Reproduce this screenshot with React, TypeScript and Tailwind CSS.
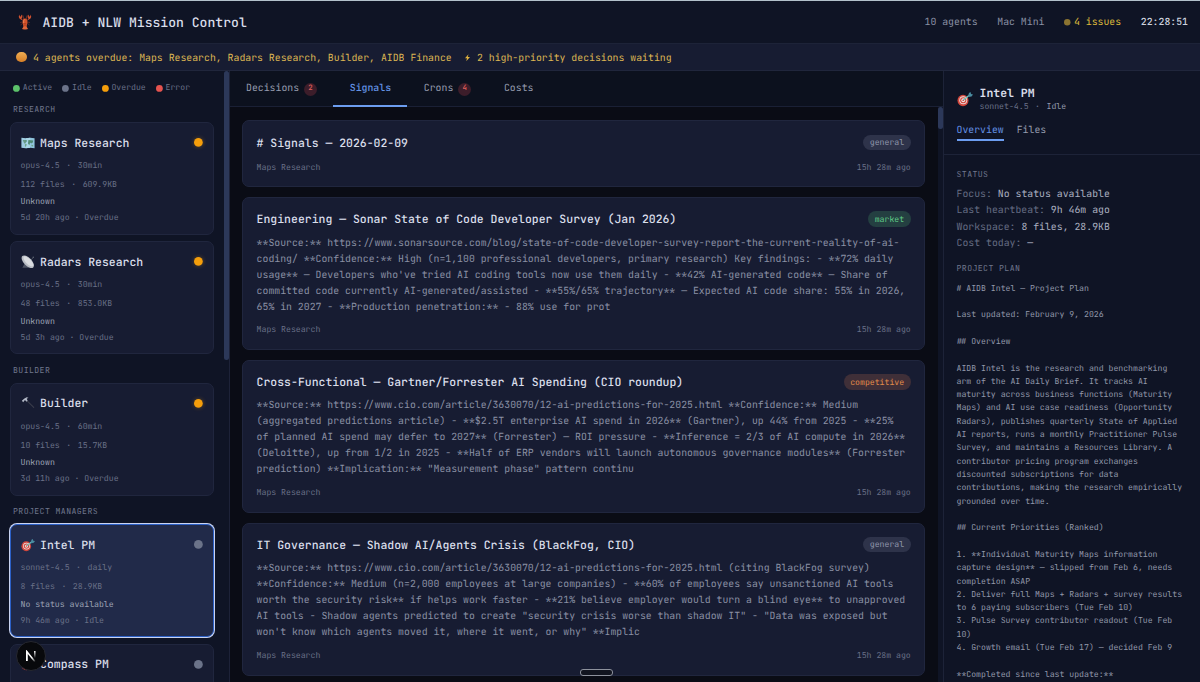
import type { ReactNode } from 'react';

type IconProps = { className?: string };

function Lobster({ className }: IconProps) {
  return (
    <svg viewBox="0 0 32 32" className={className} fill="none">
      <path d="M10 12C4 10 2 6 5 1c0 3 1 4 3 4 0-2 1-3 2-4 1 4 1 6-1 8l4 5M22 12c6-2 8-6 5-11 0 3-1 4-3 4 0-2-1-3-2-4-1 4-1 6 1 8l-4 5" fill="#cf5230" />
      <path d="M14 12 12 3M18 12l2-9" stroke="#a8401f" strokeWidth="1.2" />
      <path d="M11 16 6 17M11 19l-4 3M21 16l5 1M21 19l4 3" stroke="#7a3022" strokeWidth="1.3" />
      <path d="M16 9c4 0 5 4 5 8l-2 9h-6l-2-9c0-4 1-8 5-8Z" fill="#d5532b" />
      <path d="M13.5 19h5M13.5 22h5" stroke="#9a3519" strokeWidth="1" />
      <path d="m13 25-3 5 4 1h4l4-1-3-5Z" fill="#e0673a" />
      <path d="M15 11c-2 2-2 4-1.500 7" stroke="#f39a66" strokeWidth="1.500" />
    </svg>
  );
}

function WorldMap({ className }: IconProps) {
  return (
    <svg viewBox="0 0 32 32" className={className}>
      <path d="m1 4 10 1 10-1 10 1v23l-10-1-10 1-10-1Z" fill="#8fc4dc" />
      <path d="m11 5 10-1v23l-10 1Z" fill="#a9d6e6" />
      <path d="M4 9h7l3 2-3 4-2 3-3-4Z" fill="#4f8a72" />
      <path d="m9 18 4 1-2 6-2-2Z" fill="#5c9a78" />
      <path d="m17 9 11 1-1 5-4 2-2-2-2 6-3-4Z" fill="#4f8a72" />
      <path d="m24 20 4 1-1 3-3-1Z" fill="#6aa37c" />
      <path d="M1 4l10 1v23L1 27Z" fill="#ffffff" opacity=".15" />
    </svg>
  );
}

function Dish({ className }: IconProps) {
  return (
    <svg viewBox="0 0 32 32" className={className}>
      <path d="m9 18-6 11h16l-6-10Z" fill="#4c5263" />
      <path d="M18 16 29 5" stroke="#646b78" strokeWidth="1.500" />
      <ellipse cx="15.500" cy="15.500" rx="18" ry="9" transform="rotate(46 15.500 15.500)" fill="#b9bdc4" />
      <ellipse cx="17" cy="14.500" rx="15" ry="6" transform="rotate(46 17 14.500)" fill="#d9dbdf" />
      <circle cx="28" cy="5" r="1.800" fill="#59606e" />
    </svg>
  );
}

function Hammer({ className }: IconProps) {
  return (
    <svg viewBox="0 0 32 32" className={className} fill="none">
      <path d="m14 11 15 15" stroke="#3a3d4b" strokeWidth="2.400" strokeLinecap="round" />
      <path d="M2 11 7 6l6-3 4 1-4 2 2 4-2 3-4-4-4 5Z" fill="#b4bac8" />
    </svg>
  );
}

function Dart({ className }: IconProps) {
  return (
    <svg viewBox="0 0 32 32" className={className} fill="none">
      <ellipse cx="12" cy="19" rx="11" ry="11.500" fill="#d2473d" />
      <circle cx="12.500" cy="18.500" r="7.800" fill="#eee3e3" />
      <circle cx="12.500" cy="18.500" r="6.200" fill="#d2473d" />
      <circle cx="12.500" cy="18.500" r="3.800" fill="#efe5e5" />
      <circle cx="12.500" cy="18.500" r="1.700" fill="#c94138" />
      <path d="m13 18 11-9" stroke="#6cc4bd" strokeWidth="2.800" />
      <path d="m22 10 2-6 3-2 1 4 4 1-3 4-6 1Z" fill="#4a8ca0" />
    </svg>
  );
}

function Bolt({ className }: IconProps) {
  return (
    <svg viewBox="0 0 10 14" className={className}>
      <path d="M7 0 0 8h4L2.500 14 10 5.500H5.500Z" fill="#e0b23e" />
    </svg>
  );
}

function Dot({ className }: IconProps) {
  return (
    <svg viewBox="0 0 10 10" className={'overflow-visible ' + className}>
      <circle cx="5" cy="5" r="5" fill="currentColor" />
    </svg>
  );
}

type Agent = {
  name: string;
  icon: (p: IconProps) => ReactNode;
  details?: {
    model: string;
    every: string;
    files: string;
    size: string;
    status: string;
    seen: string;
  };
  idle?: boolean;
  selected?: boolean;
};

const GROUPS: { title: string; agents: Agent[] }[] = [
  {
    title: 'RESEARCH',
    agents: [
      { name: 'Maps Research', icon: WorldMap, details: { model: 'opus-4.5', every: '30min', files: '112 files', size: '609.9KB', status: 'Unknown', seen: '5d 20h ago · Overdue' } },
      { name: 'Radars Research', icon: Dish, details: { model: 'opus-4.5', every: '30min', files: '48 files', size: '853.0KB', status: 'Unknown', seen: '5d 3h ago · Overdue' } },
    ],
  },
  {
    title: 'BUILDER',
    agents: [
      { name: 'Builder', icon: Hammer, details: { model: 'opus-4.5', every: '60min', files: '10 files', size: '15.7KB', status: 'Unknown', seen: '3d 11h ago · Overdue' } },
    ],
  },
  {
    title: 'PROJECT MANAGERS',
    agents: [
      { name: 'Intel PM', icon: Dart, details: { model: 'sonnet-4.5', every: 'daily', files: '8 files', size: '28.9KB', status: 'No status available', seen: '9h 46m ago · Idle' }, idle: true, selected: true },
      { name: 'Compass PM', icon: Dart, idle: true },
    ],
  },
];

const LEGEND = [
  { label: 'Active', dot: 'size-[6.800px] text-[#5cc26a]' },
  { label: 'Idle', dot: 'size-[6.800px] text-[#6b7389]' },
  { label: 'Overdue', dot: 'size-[6.800px] text-[#f59e0b]' },
  { label: 'Error', dot: 'size-[6.800px] text-[#e5534f]' },
];

const SIGNALS = [
  { title: '# Signals — 2026-02-09', tag: 'general', body: '' },
  {
    title: 'Engineering — Sonar State of Code Developer Survey (Jan 2026)',
    tag: 'market',
    body: "**Source:** https://www.sonarsource.com/blog/state-of-code-developer-survey-report-the-current-reality-of-ai-coding/ **Confidence:** High (n=1,100 professional developers, primary research) Key findings: - **72% daily usage** — Developers who've tried AI coding tools now use them daily - **42% AI-generated code** — Share of committed code currently AI-generated/assisted - **55%/65% trajectory** — Expected AI code share: 55% in 2026, 65% in 2027 - **Production penetration:** - 88% use for prot",
  },
  {
    title: 'Cross-Functional — Gartner/Forrester AI Spending (CIO roundup)',
    tag: 'competitive',
    body: '**Source:** https://www.cio.com/article/3630070/12-ai-predictions-for-2025.html **Confidence:** Medium (aggregated predictions article) - **$2.5T enterprise AI spend in 2026** (Gartner), up 44% from 2025 - **25% of planned AI spend may defer to 2027** (Forrester) — ROI pressure - **Inference = 2/3 of AI compute in 2026** (Deloitte), up from 1/2 in 2025 - **Half of ERP vendors will launch autonomous governance modules** (Forrester prediction) **Implication:** "Measurement phase" pattern continu',
  },
  {
    title: 'IT Governance — Shadow AI/Agents Crisis (BlackFog, CIO)',
    tag: 'general',
    body: '**Source:** https://www.cio.com/article/3630070/12-ai-predictions-for-2025.html (citing BlackFog survey) **Confidence:** Medium (n=2,000 employees at large companies) - **60% of employees say unsanctioned AI tools worth the security risk** if helps work faster - **21% believe employer would turn a blind eye** to unapproved AI tools - Shadow agents predicted to create "security crisis worse than shadow IT" - "Data was exposed but won\'t know which agents moved it, where it went, or why" **Implic',
  },
];

const TAG_STYLE: Record<string, string> = {
  general: 'bg-[#2e334a] text-[#9096aa]',
  market: 'bg-[#243f41] text-[#60cb87]',
  competitive: 'bg-[#3f2f38] text-[#e28c4b]',
};

const PLAN = `# AIDB Intel — Project Plan

Last updated: February 9, 2026

## Overview

AIDB Intel is the research and benchmarking arm of the AI Daily Brief. It tracks AI maturity across business functions (Maturity Maps) and AI use case readiness (Opportunity Radars), publishes quarterly State of Applied AI reports, runs a monthly Practitioner Pulse Survey, and maintains a Resources Library. A contributor pricing program exchanges discounted subscriptions for data contributions, making the research empirically grounded over time.

## Current Priorities (Ranked)

1. **Individual Maturity Maps information capture design** — slipped from Feb 6, needs completion ASAP
2. Deliver full Maps + Radars + survey results to 6 paying subscribers (Tue Feb 10)
3. Pulse Survey contributor readout (Tue Feb 10)
4. Growth email (Tue Feb 17) — decided Feb 9

**Completed since last update:**`;

function Meta({ a, b }: { a: string; b: string }) {
  return (
    <div className="flex h-[13px] items-center gap-[6.550px]">
      <span>{a}</span>
      <span>·</span>
      <span>{b}</span>
    </div>
  );
}

function AgentCard({ agent }: { agent: Agent }) {
  const Icon = agent.icon;
  const d = agent.details;
  return (
    <div
      className={
        'h-[113px] w-[204px] shrink-0 rounded-[7px] border px-[9.500px] pt-[10px] text-[8.19px] text-[#697087] ' +
        (agent.selected
          ? 'border-[#2c60c6] bg-[#212a49] ring-1 ring-[#c9d3f0]'
          : 'border-[#20263e] bg-[#171c32]')
      }
    >
      <div className="flex h-[19px] items-center">
        <Icon className="mr-[5.500px] size-[14px]" />
        <span className="pt-[1.500px] text-[11.47px] font-medium text-[#dadeea]">{agent.name}</span>
        <Dot
          className={
            'mr-[0.300px] ml-auto size-[8.800px] ' +
            (agent.idle ? 'text-[#6b7389]' : 'rounded-full text-[#f59e0b] shadow-[0_0_4px_#f59e0b55]')
          }
        />
      </div>
      {d && (
        <>
          <div className="mt-[7.500px]">
            <Meta a={d.model} b={d.every} />
          </div>
          <div className="mt-[6px]">
            <Meta a={d.files} b={d.size} />
          </div>
          <div className="mt-[4.800px] leading-[13px] text-[#9ca2b4]">{d.status}</div>
          <div className="mt-[3.200px] leading-[13px]">{d.seen}</div>
        </>
      )}
    </div>
  );
}

function Sidebar() {
  return (
    <aside className="flex w-[230px] shrink-0 border-r border-[#1d2238] bg-[#0f1425]">
      <div className="flex min-w-0 flex-1 flex-col overflow-hidden pl-[10px]">
        <div className="mt-[11px] ml-[3px] flex h-[13px] shrink-0 items-center gap-[10px] text-[8.19px] text-[#697087]">
          {LEGEND.map((l) => (
            <span key={l.label} className="flex items-center gap-[3px]">
              <Dot className={l.dot} />
              {l.label}
            </span>
          ))}
        </div>
        {GROUPS.map((g, i) => (
          <section key={g.title} className={'shrink-0 ' + (i === 0 ? 'mt-[9px]' : 'mt-[10.500px]')}>
            <h2 className="ml-[3px] h-[13px] text-[8.19px] leading-[13px] tracking-[0.41px] text-[#70778d]">
              {g.title}
            </h2>
            <div className="mt-[5px] flex flex-col gap-[6.300px]">
              {g.agents.map((a) => (
                <AgentCard key={a.name} agent={a} />
              ))}
            </div>
          </section>
        ))}
      </div>
      <div className="h-[289px] w-[5px] rounded-full bg-[#2c3859]" />
    </aside>
  );
}

function Tab({ label, count, active }: { label: string; count?: number; active?: boolean }) {
  return (
    <div
      className={
        '-mb-px flex items-center gap-[4.900px] border-b-2 px-[16.400px] ' +
        (active ? 'border-[#6c9df0] text-[#6493e6]' : 'border-transparent text-[#969cae]')
      }
    >
      <span className={active ? 'font-medium' : ''}>{label}</span>
      {count !== undefined && (
        <span className="mt-[2px] flex size-[13px] items-center justify-center rounded-full bg-[#3c1d2a] text-[7.400px] font-medium text-[#e0605c]">
          {count}
        </span>
      )}
    </div>
  );
}

function SignalCard({ title, tag, body }: { title: string; tag: string; body: string }) {
  return (
    <article className="shrink-0 rounded-[7px] border border-[#20263e] bg-[#171c32] px-[13.300px] py-[13px]">
      <div className="flex h-[16px] items-center justify-between">
        <h3 className="pt-[1.800px] text-[11.47px] font-medium text-[#dadeea]">{title}</h3>
        <span className={'flex h-[15.500px] items-center rounded-full px-[6.600px] pt-[1.500px] text-[8.19px] ' + TAG_STYLE[tag]}>
          {tag}
        </span>
      </div>
      {body && <p className="mt-[7.500px] text-[9.83px] leading-[15.980px] break-words text-[#8a90a4]">{body}</p>}
      <div className={'flex h-[13px] items-center justify-between pt-[2px] text-[8.19px] text-[#697087] ' + (body ? 'mt-[8.500px]' : 'mt-[10px]')}>
        <span>Maps Research</span>
        <span>15h 28m ago</span>
      </div>
    </article>
  );
}

function Main() {
  return (
    <main className="flex min-w-0 flex-1 flex-col bg-[#0a0c15]">
      <nav className="flex h-[36px] shrink-0 border-b border-[#1a2035] bg-[#0c111e] text-[9.83px]">
        <div className="-ml-[0.400px] flex">
          <Tab label="Decisions" count={2} />
          <Tab label="Signals" active />
          <Tab label="Crons" count={4} />
          <Tab label="Costs" />
        </div>
      </nav>
      <div className="flex min-h-0 flex-1">
        <div className="flex min-w-0 flex-1 flex-col gap-[9.800px] overflow-hidden pt-[13.400px] pr-[13px] pl-[12.300px]">
          {SIGNALS.map((s) => (
            <SignalCard key={s.title} {...s} />
          ))}
        </div>
        <div className="w-[5px] bg-[#0f1425]">
          <div className="h-[22px] rounded-full bg-[#2c3859]" />
        </div>
      </div>
    </main>
  );
}

function Field({ label, value }: { label: string; value: string }) {
  return (
    <div>
      {label} <span className="text-[#abb0c0]">{value}</span>
    </div>
  );
}

function Details() {
  return (
    <aside className="flex w-[257px] shrink-0 flex-col overflow-hidden border-l border-[#1d2338] bg-[#0f1425]">
      <div className="h-[84px] shrink-0 border-b border-[#1d2338] px-[12.500px] pt-[14px]">
        <div className="flex h-[29px] items-center gap-[7px]">
          <Dart className="mb-[2px] size-[16px]" />
          <div>
            <div className="h-[15px] text-[11.47px] leading-[16px] font-semibold text-[#dadeea]">Intel PM</div>
            <div className="flex h-[13px] items-center gap-[6.550px] pt-[1px] text-[8.19px] text-[#697087]">
              <span>sonnet-4.5</span>
              <span>·</span>
              <span className="text-[#9298aa]">Idle</span>
            </div>
          </div>
        </div>
        <div className="mt-[8px] flex gap-[13px] text-[9.83px] leading-[15px]">
          <span className="h-[19px] border-b-2 border-[#6c9df0] text-[#6493e6]">Overview</span>
          <span className="text-[#969cae]">Files</span>
        </div>
      </div>
      <div className="pt-[13.500px] pr-[16px] pl-[12.500px]">
        <h2 className="h-[13px] text-[8.19px] leading-[13px] tracking-[0.41px] text-[#70778d]">STATUS</h2>
        <div className="mt-[4.500px] text-[9.83px] leading-[16.400px] text-[#656c83]">
          <Field label="Focus:" value="No status available" />
          <Field label="Last heartbeat:" value="9h 46m ago" />
          <Field label="Workspace:" value="8 files, 28.9KB" />
          <Field label="Cost today:" value="—" />
        </div>
        <h2 className="mt-[11.500px] h-[13px] text-[8.19px] leading-[13px] tracking-[0.41px] text-[#70778d]">
          PROJECT PLAN
        </h2>
        <div className="mt-[6.500px] text-[8.19px] leading-[13.320px] whitespace-pre-wrap text-[#9298aa]">{PLAN}</div>
      </div>
    </aside>
  );
}

export default function App() {
  return (
    <div className="relative flex h-[682px] w-[1200px] flex-col overflow-hidden border-t border-[#b3c1cb] bg-[#0a0c15] font-['JetBrains_Mono','DejaVu_Sans_Mono',monospace] [text-rendering:geometricPrecision]">
      <header className="flex h-[43px] shrink-0 items-center border-b border-[#1d2338] bg-[#0f1425] pt-[1.500px] pr-[12px] pl-[16.500px]">
        <Lobster className="mr-[10px] mb-[1.500px] size-[16px]" />
        <h1 className="text-[13.1px] font-medium text-[#dadeea]">AIDB + NLW Mission Control</h1>
        <div className="ml-auto flex items-center gap-[19.700px] text-[9.83px] text-[#8a90a4]">
          <span>10 agents</span>
          <span>Mac Mini</span>
          <span className="flex items-center gap-[3.300px] text-[#dcb93c]">
            <Dot className="size-[6.500px] text-[#8b7431]" />4 issues
          </span>
          <span className="font-medium text-[#cdd2df]">22:28:51</span>
        </div>
      </header>
      <div className="flex h-[27px] shrink-0 items-center border-b border-[#20263c] bg-[#171c32] pt-[2px] pl-[16px] text-[9.83px] text-[#dcb652]">
        <span className="mr-[6.500px] mb-[2px] size-[10.500px] rounded-full bg-linear-to-b from-[#f0ad52] to-[#d67f26]" />
        <span>4 agents overdue: Maps Research, Radars Research, Builder, AIDB Finance</span>
        <Bolt className="mr-[6.800px] mb-px ml-[13.500px] h-[7.500px] w-[5px]" />
        <span>2 high-priority decisions waiting</span>
      </div>
      <div className="flex min-h-0 flex-1">
        <Sidebar />
        <Main />
        <Details />
      </div>
      <div className="absolute top-[640px] left-[16px] flex size-[30px] items-center justify-center rounded-full border border-[#262830] bg-[#08090c]">
        <svg viewBox="0 0 12 12" className="size-[12px]" fill="none">
          <defs>
            <linearGradient id="nd" x1="6" y1="5" x2="10" y2="11" gradientUnits="userSpaceOnUse">
              <stop offset=".4" stopColor="#fff" />
              <stop offset="1" stopColor="#fff" stopOpacity=".2" />
            </linearGradient>
            <linearGradient id="nv" x1="10" y1="1" x2="10" y2="8" gradientUnits="userSpaceOnUse">
              <stop offset="0" stopColor="#fff" />
              <stop offset="1" stopColor="#fff" stopOpacity="0" />
            </linearGradient>
          </defs>
          <path d="M1.800 11V1.500L9.800 11.500" stroke="url(#nd)" strokeWidth="1.500" />
          <path d="M1.800 1.500V11" stroke="#fff" strokeWidth="1.500" />
          <path d="M9.800 1v7" stroke="url(#nv)" strokeWidth="1.500" />
        </svg>
      </div>
      <div className="absolute top-[668px] left-[580px] h-[7px] w-[33px] rounded-[3px] border border-[#8d919c] bg-[#11141f]" />
    </div>
  );
}
